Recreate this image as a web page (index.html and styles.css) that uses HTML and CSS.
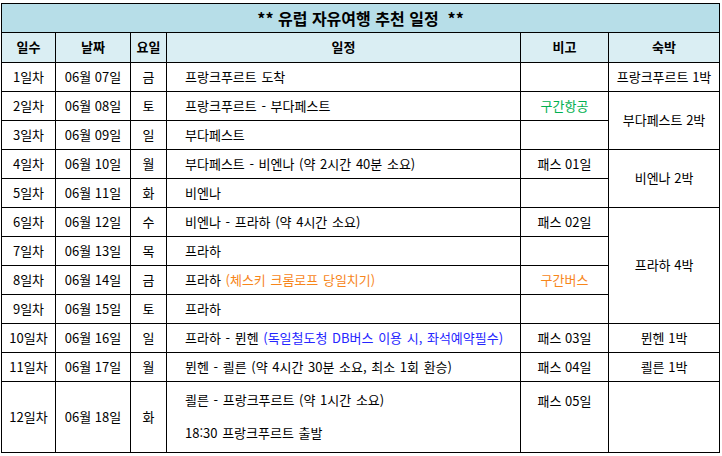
FILE: index.html
```html
<!DOCTYPE html>
<html lang="ko">
<head>
<meta charset="utf-8">
<title>유럽 자유여행 추천 일정</title>
<link rel="stylesheet" href="styles.css">
</head>
<body>
<table class="plan">
  <colgroup>
    <col class="c-day">
    <col class="c-date">
    <col class="c-wd">
    <col class="c-sched">
    <col class="c-note">
    <col class="c-stay">
  </colgroup>
  <thead>
    <tr class="title-row"><th colspan="6">** 유럽 자유여행 추천 일정 &nbsp;**</th></tr>
    <tr class="head-row">
      <th>일수</th><th>날짜</th><th>요일</th><th>일정</th><th>비고</th><th>숙박</th>
    </tr>
  </thead>
  <tbody>
    <tr><td>1일차</td><td>06월 07일</td><td>금</td><td class="sched">프랑크푸르트 도착</td><td></td><td>프랑크푸르트 1박</td></tr>
    <tr><td>2일차</td><td>06월 08일</td><td>토</td><td class="sched">프랑크푸르트 - 부다페스트</td><td class="green">구간항공</td><td rowspan="2">부다페스트 2박</td></tr>
    <tr><td>3일차</td><td>06월 09일</td><td>일</td><td class="sched">부다페스트</td><td></td></tr>
    <tr><td>4일차</td><td>06월 10일</td><td>월</td><td class="sched">부다페스트 - 비엔나 (약 2시간 40분 소요)</td><td>패스 01일</td><td rowspan="2">비엔나 2박</td></tr>
    <tr><td>5일차</td><td>06월 11일</td><td>화</td><td class="sched">비엔나</td><td></td></tr>
    <tr><td>6일차</td><td>06월 12일</td><td>수</td><td class="sched">비엔나 - 프라하 (약 4시간 소요)</td><td>패스 02일</td><td rowspan="4">프라하 4박</td></tr>
    <tr><td>7일차</td><td>06월 13일</td><td>목</td><td class="sched">프라하</td><td></td></tr>
    <tr><td>8일차</td><td>06월 14일</td><td>금</td><td class="sched">프라하 <span class="orange">(체스키 크롬로프 당일치기)</span></td><td class="orange">구간버스</td></tr>
    <tr><td>9일차</td><td>06월 15일</td><td>토</td><td class="sched">프라하</td><td></td></tr>
    <tr><td>10일차</td><td>06월 16일</td><td>일</td><td class="sched">프라하 - 뮌헨 <span class="blue">(독일철도청 DB버스 이용 시, 좌석예약필수)</span></td><td>패스 03일</td><td>뮌헨 1박</td></tr>
    <tr><td>11일차</td><td>06월 17일</td><td>월</td><td class="sched">뮌헨 - 쾰른 (약 4시간 30분 소요, 최소 1회 환승)</td><td>패스 04일</td><td>쾰른 1박</td></tr>
    <tr class="last-row"><td>12일차</td><td>06월 18일</td><td>화</td><td class="sched">쾰른 - 프랑크푸르트 (약 1시간 소요)<br><br>18:30 프랑크푸르트 출발</td><td class="top">패스 05일</td><td></td></tr>
  </tbody>
</table>
</body>
</html>
```

FILE: styles.css
```css
html, body {
  margin: 0;
  padding: 0;
  background: #ffffff;
}

body {
  font-family: "Noto Sans CJK KR", "Noto Sans", sans-serif;
  font-size: 13px;
  color: #000000;
}

.plan {
  border-collapse: collapse;
  table-layout: fixed;
  width: 718px;
  margin: 3px 0 0 1px;
}

.c-day { width: 54px; }
.c-date { width: 75px; }
.c-wd { width: 36px; }
.c-sched { width: 354px; }
.c-note { width: 88px; }
.c-stay { width: 111px; }

.plan th,
.plan td {
  border: 1px solid #000000;
  padding: 0;
  height: 29px;
  box-sizing: border-box;
  text-align: center;
  vertical-align: middle;
  line-height: 16.5px;
  white-space: nowrap;
}

.title-row th {
  background: #b7dee8;
  font-size: 16px;
  font-weight: bold;
}

.head-row th {
  background: #daeef3;
  font-weight: bold;
  height: 30px;
}

.plan td.sched {
  text-align: left;
  padding-left: 18px;
  word-spacing: 1px;
}

.last-row td {
  height: 71px;
}

.plan td.top {
  vertical-align: top;
  padding-top: 11px;
}

.green { color: #00b050; }
.orange { color: #f7861b; }
.blue { color: #2525ff; }
```
